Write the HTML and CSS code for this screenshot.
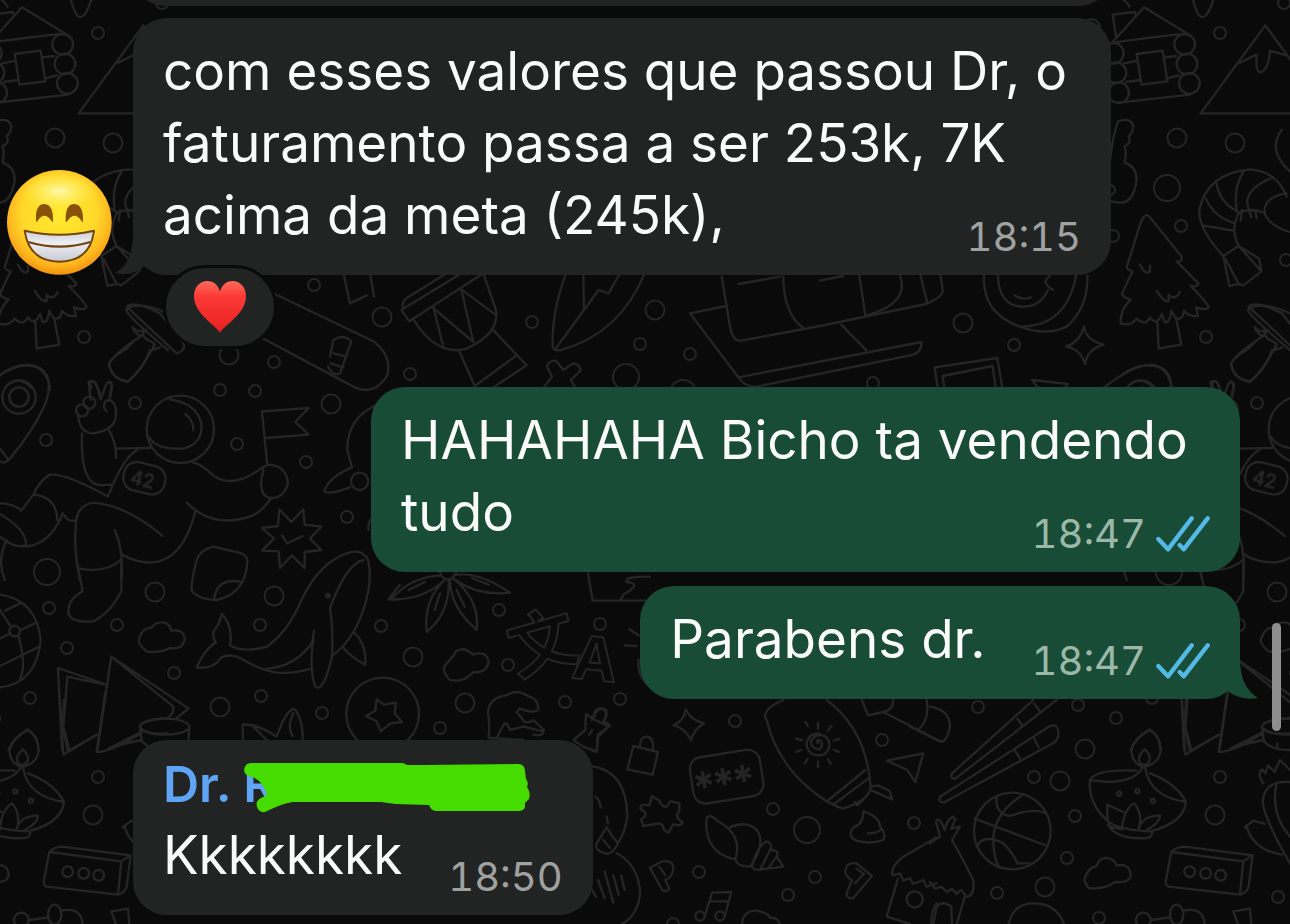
FILE: index.html
```
<!DOCTYPE html>
<html lang="pt-BR">
<head>
  <meta charset="UTF-8" />
  <meta name="viewport" content="width=device-width, initial-scale=1.0"/>
  <title>Chat</title>
  <link rel="stylesheet" href="styles.css">
</head>
<body>

  <!-- Wallpaper: one tile of doodles, repeated every 1122px -->
  <svg class="wallpaper" aria-hidden="true">
    <defs>
      <g id="dot"><circle r="6"/></g>
      <g id="ring"><circle r="9.5"/></g>
      <g id="hoop"><circle r="13"/></g>

      <g id="tile">
        <!-- bubbles between the doodles -->
        <use href="#dot" x="1220" y="33"/><use href="#ring" x="1177" y="138"/><use href="#ring" x="1235" y="143"/>
        <use href="#hoop" x="1167" y="188"/><use href="#dot" x="1181" y="226"/><use href="#dot" x="1113" y="236"/>
        <use href="#dot" x="1286" y="260"/><use href="#dot" x="1284" y="3"/><use href="#dot" x="1206" y="337"/>
        <use href="#dot" x="314" y="285"/><use href="#ring" x="382" y="317"/><use href="#ring" x="229" y="355"/>
        <use href="#dot" x="532" y="322"/><use href="#ring" x="655" y="310"/><use href="#dot" x="640" y="344"/>
        <use href="#dot" x="690" y="354"/><use href="#hoop" x="626" y="377"/><use href="#dot" x="410" y="374"/>
        <use href="#hoop" x="683" y="393"/><use href="#ring" x="963" y="323"/><use href="#dot" x="1014" y="345"/>
        <use href="#dot" x="873" y="383"/><use href="#dot" x="135" y="403"/><use href="#dot" x="274" y="362"/>
        <use href="#dot" x="220" y="390"/><use href="#dot" x="255" y="391"/><use href="#ring" x="331" y="404"/>
        <use href="#dot" x="46" y="440"/><use href="#dot" x="237" y="444"/><use href="#dot" x="306" y="462"/>
        <use href="#dot" x="347" y="517"/><use href="#hoop" x="47" y="572"/><use href="#ring" x="155" y="592"/>
        <use href="#dot" x="49" y="608"/><use href="#dot" x="117" y="625"/><use href="#dot" x="67" y="648"/>
        <use href="#ring" x="274" y="596"/><use href="#dot" x="260" y="625"/><use href="#dot" x="381" y="626"/>
        <use href="#dot" x="174" y="673"/><use href="#dot" x="30" y="698"/><use href="#ring" x="220" y="707"/>
        <use href="#dot" x="261" y="696"/><use href="#dot" x="322" y="713"/><use href="#dot" x="499" y="610"/>
        <use href="#dot" x="600" y="624"/><use href="#ring" x="413" y="657"/><use href="#dot" x="508" y="665"/>
        <use href="#ring" x="465" y="703"/><use href="#dot" x="565" y="702"/><use href="#dot" x="440" y="728"/>
        <use href="#dot" x="620" y="699"/><use href="#dot" x="735" y="721"/><use href="#dot" x="882" y="740"/>
        <use href="#dot" x="773" y="809"/><use href="#hoop" x="807" y="830"/><use href="#dot" x="914" y="823"/>
        <use href="#dot" x="699" y="872"/><use href="#dot" x="815" y="877"/><use href="#dot" x="788" y="895"/>
        <use href="#dot" x="673" y="924"/><use href="#dot" x="978" y="707"/><use href="#dot" x="1078" y="705"/>
        <use href="#dot" x="1116" y="718"/><use href="#ring" x="1085" y="749"/><use href="#dot" x="1034" y="777"/>
        <use href="#ring" x="1060" y="781"/><use href="#dot" x="1220" y="777"/><use href="#dot" x="1075" y="816"/>
        <use href="#ring" x="1215" y="815"/><use href="#dot" x="1067" y="858"/><use href="#ring" x="1045" y="887"/>
        <use href="#dot" x="997" y="893"/><use href="#dot" x="1099" y="918"/><use href="#dot" x="1278" y="897"/>

        <!-- cabin, mountain, guitar, shrimp -->
        <g class="x3" transform="translate(1090 0) scale(.3333)">
          <path d="M66 128L162 22L290 100Q180 112 66 128M78 110L68 44L135 36L138 48"/>
          <circle cx="284" cy="133" r="31"/><circle cx="291" cy="192" r="31"/><circle cx="298" cy="250" r="31"/>
          <circle cx="70" cy="160" r="31"/><circle cx="78" cy="218" r="31"/><circle cx="86" cy="278" r="31"/>
          <path d="M140 162L218 152L232 244L154 254ZM102 190L142 182M226 172L258 168M108 246L150 240M234 234L268 226M86 308L300 284"/>
          <path d="M332 340L526 76L720 340ZM450 188L500 164Q496 214 510 217Q536 212 540 152L590 166"/>
          <path d="M60 480Q70 400 84 364Q124 350 130 380Q128 400 116 408Q126 430 104 438Q110 460 104 488Q140 500 140 540Q130 610 90 608Q50 606 40 590"/>
          <circle cx="60" cy="570" r="15"/>
          <path d="M400 768Q326 690 328 630Q350 520 480 508Q560 514 590 590M400 768L446 738Q420 690 446 640Q480 620 524 640M338 676L430 692M348 596Q370 650 434 670M380 552Q390 610 446 636M460 516Q430 560 440 630M550 532Q480 560 472 600Q470 620 480 634M524 640Q520 590 590 580M524 640Q540 680 600 696M456 630L452 662M476 626L484 652M496 630L500 654M400 768L418 858L446 852L406 776M446 852L460 856L514 814L508 776L446 738L514 814"/>
          <path d="M575 390Q530 450 600 515M300 -40Q330 120 370 0M70 -20Q110 0 118 20M-8 60Q20 50 30 80"/>
        </g>

        <!-- pine tree, mushroom, coin, sled -->
        <g class="x3" transform="translate(820 230) scale(.3333)">
          <path d="M958 -10Q975 -60 990 -38L1085 80Q1088 96 1070 94L1135 160Q1134 172 1112 168Q1150 205 1166 230Q1160 244 1128 232L1134 258Q1110 262 1092 242Q1090 272 1066 264L1054 242Q1050 280 1034 276L1026 252Q1010 290 990 262Q976 290 950 266Q930 290 902 280Q900 240 932 208Q912 204 906 192Q920 160 938 124Q916 118 922 106Z"/>
          <path d="M1012 276L1016 356L1084 344L1068 262M960 104Q976 136 990 124L990 108M1010 182Q1030 216 1046 214L1046 194Q1064 214 1080 186"/>
          <path d="M1284 240Q1320 210 1410 250M1284 240Q1290 260 1410 360M1304 292Q1320 310 1336 300Q1330 320 1350 330L1368 340L1366 360L1386 352M1330 318Q1250 370 1234 400Q1240 446 1290 456Q1330 420 1370 344"/>
          <path d="M492 137Q486 250 600 290Q680 320 740 290Q806 230 802 137M600 290Q740 290 768 137M534 137Q536 230 612 230Q660 230 684 180M584 196Q608 212 632 202M690 137Q660 160 700 180"/>
          <path d="M792 290Q798 330 850 344Q800 360 796 402Q780 356 738 350Q780 336 792 290Z"/>
          <path d="M344 412L532 384L548 480M344 412L354 480M368 438L518 408L528 480M368 438L374 480M636 450L744 462L730 480M636 450L660 480M850 474Q960 390 1010 408Q1054 430 1056 480M920 474Q960 430 1000 474"/>
          <path d="M1180 474Q1170 450 1190 456L1206 490M1230 456Q1250 450 1236 500"/>
          <path d="M-282 228L-390 250L-245 442L305 336Q306 370 270 376L-190 470Q-225 472 -245 442M-295 140L-270 290Q-262 336 -236 332L0 288L318 222Q370 200 368 180L362 137"/>
          <path d="M-245 162L-120 140M-110 140Q-110 250 -50 294M64 284L140 362M302 137L322 220M118 137L136 256M240 137Q270 220 140 256M0 152L70 138"/>
        </g>

        <!-- drum, leaf, skateboard -->
        <g class="x3" transform="translate(370 260) scale(.3333)">
          <path d="M94 150L118 184L340 40M94 150L330 6M98 140Q96 120 120 108L230 40M130 178Q200 290 290 266Q390 220 378 150L340 40M188 142L310 246L274 88L376 164M190 142L220 260M366 206L470 316L376 378M268 274L314 378L440 286"/>
          <path d="M588 40Q544 160 548 262Q556 274 574 270Q750 220 824 40M554 270L686 90L716 100L750 40M640 40L642 150"/>
          <path d="M524 378L546 350L530 318Q540 300 558 302L580 330L610 310Q630 314 632 332L602 360L614 378"/>
          <path d="M0 40L12 110M-60 130L-10 106M-60 130L-80 40"/>
        </g>
        <g class="x3" transform="translate(0 0) scale(.3333)">
          <path d="M820 880L1120 1024Q1180 1070 1160 1130Q1120 1190 1060 1160L760 1000"/>
          <path d="M990 1070L1000 1020Q1030 1000 1054 1024L1020 1120Q1000 1130 984 1100M1000 1060L1040 1070M992 1090L1030 1102"/>
        </g>

        <!-- pin, astronaut, flag, rocket -->
        <g class="x3" transform="translate(0 350) scale(.3333)">
          <path d="M0 75Q60 30 120 54Q160 80 140 150Q110 230 26 330Q10 344 0 334M0 296L26 330"/>
          <circle cx="57" cy="141" r="50"/><circle cx="57" cy="141" r="29"/>
          <circle cx="541" cy="238" r="101"/>
          <path d="M448 262Q470 300 550 296Q610 280 604 220Q590 160 510 148M556 192Q580 210 580 240"/>
          <path d="M234 190Q236 250 280 250Q350 240 348 190Q350 160 330 150Q310 150 312 174L320 184M272 150L266 96Q280 86 290 104L302 148L320 100Q334 90 334 110L328 150"/>
          <circle cx="246" cy="181" r="18"/><circle cx="268" cy="158" r="18"/>
          <path d="M246 250Q240 400 300 406L334 404M326 240Q350 280 348 324M348 296L450 294M412 300Q370 320 324 440Q200 370 150 374Q120 390 100 434L64 482Q40 460 0 460M100 434Q170 440 172 510M64 590Q150 590 188 490L200 506Q210 514 226 512M0 492Q80 540 78 584Q50 600 0 560"/>
          <path d="M580 338Q600 340 640 376Q700 420 790 350M560 458Q640 540 760 496Q790 480 812 446M586 486Q540 660 420 634Q380 626 364 610M488 558Q380 466 280 458Q230 466 228 520Q220 600 240 690M344 540Q372 600 364 690M240 656Q320 670 362 630"/>
          <path d="M786 184L926 174L886 216L926 254L798 264M786 184L802 346M790 360Q780 350 810 344Q860 350 864 400Q850 446 812 444Q780 440 784 390Z"/>
          <rect x="370" y="342" width="126" height="86" rx="38" transform="rotate(14 433 385)"/>
          <path d="M838 478L874 516L910 478L914 524L964 530L930 566L964 600L914 606L914 654L876 616L840 654L836 604L786 602L822 566L786 534L834 528ZM846 556L862 580L908 558"/>
          <path d="M1140 160Q1040 200 1042 300L1056 352Q990 380 974 420Q970 440 1050 412M1140 500Q1100 500 1106 540"/>
          <circle cx="1079" cy="394" r="26"/>
          <path d="M328 50Q340 90 384 94Q430 60 450 0M328 50Q320 30 380 -4L400 -26M380 -130Q400 -150 480 -110L550 -20Q560 0 530 10L380 -130M400 -60L420 -40L440 -60"/>
        </g>
        <text class="ink badge-no" x="131" y="486" transform="rotate(14 142 478)">42</text>

        <!-- ball, stocking, whale, map, cup, star -->
        <g class="x3" transform="translate(0 560) scale(.3333)">
          <path d="M0 104Q110 120 122 240Q110 370 0 382M0 150L30 196M62 210L104 190M0 236L28 222M16 152L60 130M0 318L118 260M56 230Q80 320 60 356"/>
          <circle cx="44" cy="213" r="16"/>
          <path d="M230 0L248 94Q200 120 206 164Q220 190 280 184Q330 160 364 94L364 0M20 -60Q-10 0 14 60"/>
          <path d="M590 0Q570 80 576 94Q600 120 650 120Q740 100 742 0Q740 -20 700 -26L640 -40Q600 -30 590 0M642 120Q650 50 724 66"/>
          <path d="M440 274Q410 250 418 234Q430 200 454 204Q470 180 500 190Q512 200 514 212Q550 206 554 236Q550 270 510 264Q480 280 440 274Z"/>
          <path d="M666 162Q660 190 640 216Q640 240 648 248Q620 260 590 322Q640 330 664 292Q690 280 720 294Q780 330 830 338Q880 342 934 326M666 162Q700 200 690 256Q730 280 800 260Q860 220 900 130Q940 40 1000 0Q1080 -50 1104 0Q1120 60 1090 150Q1060 240 998 286M1090 0Q1040 10 990 144Q1000 200 996 290Q970 400 946 380Q926 330 942 212M942 240Q890 320 800 326M1060 216Q1100 250 1096 314Q1050 290 1030 262"/>
          <path d="M186 570L174 324L314 372M208 570L190 500L202 350L314 374M292 570L334 290L566 446L530 474M334 290L520 440Q524 460 500 476M216 566L290 524M326 566L416 520"/>
          <ellipse cx="494" cy="500" rx="74" ry="24"/><path d="M420 500L426 546M568 500L566 540"/>
          <circle cx="1148" cy="462" r="109"/>
          <path d="M1130 418L1152 434L1188 428L1184 460L1206 486L1172 490L1142 514L1130 484L1098 468L1126 452Z"/>
          <path d="M730 570L728 494Q770 490 830 530L850 480Q880 430 890 456Q910 490 908 540M760 500L800 540M878 528Q860 500 880 460"/>
          <path d="M1200 74L1166 118L1200 118"/><circle cx="984" cy="107" r="5"/>
          <path d="M26 570Q40 530 84 510Q116 530 116 570"/>
        </g>

        <!-- leaves, cloud, poodle, ornament -->
        <g class="x3" transform="translate(390 560) scale(.3333)">
          <circle cx="174" cy="34" r="24"/>
          <path d="M154 46Q60 50 4 118Q100 120 164 60M164 60Q100 120 110 216Q180 160 176 60M180 60Q180 140 260 210Q270 120 190 56M190 46Q260 30 360 98Q270 110 196 60M56 90L104 66M134 150L150 100M200 90L224 140M246 54L296 74"/>
          <path d="M180 360Q150 330 170 310Q190 290 196 276Q220 256 248 284Q290 270 296 306Q290 340 250 336Q220 370 180 360Z"/>
          <path d="M296 534Q300 500 294 456Q300 410 350 406Q380 386 410 406Q450 420 444 450Q430 462 390 446L380 456L404 486Q420 490 430 480M320 534L340 496Q350 480 360 510L400 500L460 514Q460 530 430 524M300 534L400 540M430 480L462 510"/>
          <path d="M550 540L586 510L588 462L616 480L656 500L624 530L620 576L580 560ZM612 470Q614 440 640 446Q656 460 640 486M598 524L606 510"/>
          <path d="M594 40L608 122L770 122M780 50Q700 50 710 66Q760 70 700 104L690 122M718 208L746 226M704 256L740 258M746 300Q740 350 780 380"/>
        </g>
        <text class="ink glyph-zh" x="508" y="668" transform="rotate(-16 540 642)">文</text>
        <text class="ink glyph-a" x="573" y="680" transform="rotate(6 594 658)">A</text>

        <!-- lock, surfboard, password, shell -->
        <g class="x3" transform="translate(590 690) scale(.3333)">
          <path d="M288 58Q300 90 342 100Q310 120 304 150Q280 110 250 106Q280 96 288 58Z"/>
          <path d="M130 168L204 186L188 254L112 238ZM150 172Q150 138 172 140Q194 146 188 180"/>
          <rect x="304" y="190" width="212" height="140" rx="36" transform="rotate(-9 410 260)"/>
          <path d="M186 318L208 332Q214 352 230 350L242 334L268 340L268 364Q250 380 278 396Q272 412 250 402L236 428L222 420Q220 396 196 402L160 408L154 388Q180 370 152 358Q150 338 178 346Z"/>
          <path d="M580 30Q510 60 530 90Q550 180 620 260Q700 340 760 356Q840 330 842 290Q830 120 710 30M716 330L826 240M730 344L840 262M846 290L864 286L900 304L906 328L846 302M794 336L802 346L820 330"/>
          <path d="M684 160Q676 150 690 150Q704 164 688 178Q660 176 664 152Q680 126 708 140Q732 170 702 194Q660 204 650 168Q650 130 690 130M684 98V116M684 214V232M724 108L714 122M654 108L646 96M748 146L732 152M748 186L732 180M618 146L636 150M618 186L634 180M644 220L652 208M722 220L714 208"/>
          <path d="M890 212L1000 190L976 276L952 240ZM816 30L834 76L880 66Q910 60 910 30M880 66L1050 154M984 120Q1020 90 1010 30"/>
          <path d="M424 506Q340 480 350 384Q360 370 384 394Q450 430 440 490Q440 510 424 506M420 412Q470 390 500 420Q530 460 480 530Q440 530 436 506M486 530Q500 470 530 454Q550 460 540 480L510 540Q490 540 486 530M540 480Q570 480 560 500L534 536L512 538M560 500L580 530L534 536"/>
          <path d="M820 364Q870 380 870 410Q890 430 880 450Q840 464 800 452Q770 440 790 412Q820 404 820 364ZM834 430Q860 430 874 418"/>
          <path d="M180 534L216 514Q250 510 250 534Q250 560 226 570L238 596Q230 606 218 602ZM208 530L226 556"/>
          <path d="M846 558L800 520Q770 516 766 540Q764 560 786 570L770 610Q772 630 790 624ZM800 536L822 552L794 580"/>
          <path d="M344 680L366 608L424 606L404 680M358 634L416 634"/><circle cx="330" cy="678" r="14"/><circle cx="390" cy="678" r="14"/>
          <path d="M456 702Q460 660 500 662Q540 670 540 684Q560 680 570 702M0 228Q110 240 112 380Q104 430 84 460Q70 490 50 492Q10 480 20 460L50 412Q66 440 84 460M40 450L60 474M80 490Q140 520 150 600Q150 670 96 702M16 320Q30 330 32 352M50 380L54 400M24 570L44 624M44 544L70 638M70 556L86 614M94 558L104 600M0 590L18 620"/>
          <path d="M1040 442L940 500Q900 530 908 556L930 550L940 572L960 564L970 582L1000 570L1010 590L1040 580M924 566L890 680L960 702M1040 640Q1024 660 1024 702"/><circle cx="974" cy="628" r="24"/>
          <path d="M5 90L20 64Q30 50 48 60Q54 80 40 92L60 106L24 134L20 186L0 176"/>
        </g>
        <text class="ink pin-code" x="697" y="802" transform="rotate(-9 697 802)">***</text>

        <!-- chopsticks, basketball, lamp, box, hut -->
        <g class="x3" transform="translate(930 690) scale(.3333)">
          <path d="M310 30L66 250Q60 270 76 266L380 30M262 86L278 108M312 40L330 64M30 320Q24 340 44 336L376 156Q396 130 376 106L360 108ZM254 180L270 206M310 140L326 172"/>
          <circle cx="247" cy="423" r="115"/>
          <path d="M134 386L352 468M282 312Q190 370 190 450Q190 500 206 530M200 322Q194 370 240 378Q320 350 352 374M140 470Q160 430 220 460Q250 490 262 520L300 520"/>
          <path d="M18 396Q24 380 36 400L44 420Q50 390 68 380L76 388L64 416L90 410L66 450Q100 510 130 570Q134 620 110 620L94 600L80 612L66 596L50 606L34 590L16 596L0 576M0 460L30 440M18 396L30 440M104 622L80 702M10 702L20 650Q40 630 64 650L66 702"/>
          <path d="M236 702Q250 640 310 640Q380 640 402 702"/>
          <path d="M660 118Q610 150 604 180Q606 220 640 232Q690 220 692 180Q690 140 660 118ZM644 178Q620 200 630 220Q650 232 660 210Q660 190 644 178Z"/>
          <path d="M480 270Q500 236 620 242M480 270Q474 340 530 390Q560 420 660 424Q760 400 768 336Q740 280 660 250M480 270Q600 290 636 236M646 236Q660 320 768 336M532 344Q530 390 540 410L576 418Q580 360 612 340Q640 370 626 420Q630 380 690 376Q690 400 650 420M532 344L580 366M534 404Q560 450 650 444Q670 440 666 424"/>
          <circle cx="568" cy="311" r="6"/><circle cx="622" cy="304" r="6"/><circle cx="669" cy="332" r="6"/>
          <path d="M476 594Q456 570 468 556Q480 530 500 528Q510 500 530 504Q556 510 560 526Q600 520 602 554Q600 580 556 576Q520 600 476 594Z"/>
          <path d="M724 486L940 514L930 614L716 590Q704 584 708 570ZM724 486Q740 470 764 470L968 496L956 590Q950 610 930 614M940 514L968 496"/>
          <circle cx="779" cy="545" r="16"/><circle cx="827" cy="550" r="16"/><circle cx="872" cy="556" r="16"/>
          <path d="M756 30L766 194L866 134M768 30L764 110L780 186M892 6L866 186Q880 190 940 164L1000 130M940 164L1000 150M996 110L1000 150Q1020 180 1080 180M996 110Q1000 90 1080 84M998 114Q1020 136 1080 130M1042 160V172"/>
          <path d="M1080 276Q1000 270 998 340Q1010 400 1080 520M1040 280Q1020 370 1080 440M1000 280Q980 250 996 238L1006 250L1014 226L1034 246L1050 210L1080 240M944 412L970 392L1004 402M950 410Q970 480 1056 494"/>
          <path d="M664 690L720 682M760 662Q820 650 824 702M910 664L960 656L964 702M910 664L924 702"/>
          <ellipse cx="740" cy="674" rx="20" ry="30"/><circle cx="640" cy="690" r="22"/>
          <path d="M0 50Q60 60 60 110Q50 160 30 154L-60 110"/>
        </g>
      </g>
    </defs>
    <use href="#tile" x="-1122"/>
    <use href="#tile"/>
    <use href="#tile" x="1122"/>
  </svg>

  <main class="chat">

    <div class="row in">
      <div class="bubble previous"></div>
    </div>

    <div class="row in">
      <svg class="avatar" viewBox="0 0 315 315" role="img" aria-label="Emoji sorrindo">
        <defs>
          <radialGradient id="face" cx=".5" cy=".42" r=".6">
            <stop offset="0" stop-color="#ffe92e"/>
            <stop offset=".6" stop-color="#ffd829"/>
            <stop offset=".82" stop-color="#fdb61e"/>
            <stop offset="1" stop-color="#f08a0c"/>
          </radialGradient>
          <radialGradient id="shine">
            <stop offset="0" stop-color="#fff9b0"/>
            <stop offset="1" stop-color="#fff04a" stop-opacity="0"/>
          </radialGradient>
          <linearGradient id="teeth" x1="0" y1="0" x2="0" y2="1">
            <stop offset="0" stop-color="#c9ccd4"/>
            <stop offset=".4" stop-color="#eeeff3"/>
            <stop offset="1" stop-color="#c6c9d1"/>
          </linearGradient>
        </defs>
        <circle cx="157" cy="157" r="157" fill="url(#face)"/>
        <ellipse cx="157" cy="64" rx="116" ry="58" fill="url(#shine)"/>
        <path d="M87 154Q84 102 112 102Q140 104 138 154Q136 158 133 152Q112 122 92 152Q88 158 87 154Z" fill="#8a5208"/>
        <path d="M176 154Q174 102 202 102Q230 104 228 154Q226 158 223 152Q202 122 182 152Q177 158 176 154Z" fill="#8a5208"/>
        <path d="M53 182Q157 206 261 182Q250 274 157 275Q66 274 53 182Z" fill="url(#teeth)" stroke="#74420a" stroke-width="6" stroke-linejoin="round"/>
        <path d="M64 216Q157 244 250 216" fill="none" stroke="#74420a" stroke-width="7"/>
        <path d="M212 304A157 157 0 0 0 291 238Q262 284 212 304Z" fill="#f3dfc4"/>
      </svg>
      <div class="bubble wide">
        <svg class="tail tail-in" viewBox="0 0 32 40" aria-hidden="true">
          <path d="M18 0Q18 28 0 38Q18 42 31 30L31 0Z"/>
        </svg>
        com esses valores que passou Dr, o faturamento passa a ser 253k, 7K acima da meta (245k),
        <span class="meta"><time>18:15</time></span>
        <button class="reaction" type="button" aria-label="Reação: coração">
          <svg viewBox="0 0 156 156" aria-hidden="true">
            <defs>
              <linearGradient id="heart" x1="0" y1="0" x2="0" y2="1">
                <stop offset="0" stop-color="#ff6a5c"/>
                <stop offset=".3" stop-color="#fb3a36"/>
                <stop offset="1" stop-color="#e8201f"/>
              </linearGradient>
            </defs>
            <path d="M78 156C70 136 0 100 0 46C0 16 20 0 40 0C60 0 74 14 78 32C82 14 96 0 116 0C136 0 156 16 156 46C156 100 86 136 78 156Z" fill="url(#heart)"/>
          </svg>
        </button>
      </div>
    </div>

    <div class="row out after-reaction">
      <div class="bubble medium">
        HAHAHAHA Bicho ta vendendo tudo
        <span class="meta"><time>18:47</time>
          <svg class="ticks" viewBox="0 0 162 108" role="img" aria-label="Lida"><path d="M7 69L36 100L107 7M71 87L83 100L155 7"/></svg>
        </span>
      </div>
    </div>

    <div class="row out grouped">
      <div class="bubble">
        <svg class="tail tail-out" viewBox="0 0 32 40" aria-hidden="true">
          <path d="M14 0Q14 28 32 39Q12 42 1 31L1 0Z"/>
        </svg>
        Parabens dr.
        <span class="meta"><time>18:47</time>
          <svg class="ticks" viewBox="0 0 162 108" role="img" aria-label="Lida"><path d="M7 69L36 100L107 7M71 87L83 100L155 7"/></svg>
        </span>
      </div>
    </div>

    <div class="row in new-sender">
      <div class="bubble">
        <div class="sender">Dr. R
          <svg class="marker" viewBox="0 0 370 60" aria-hidden="true">
            <path d="M88 6L238 6Q242 6 244 8L260 8L356 7Q362 8 362 14L363 22Q366 26 364 30Q368 36 366 42L362 46Q363 54 356 54L274 54Q268 54 266 48L232 47L218 45L130 45Q120 46 102 55Q96 56 94 50Q92 44 98 41L104 38Q102 30 96 24L90 20Q82 20 81 13Q82 6 88 6Z"/>
          </svg>
        </div>
        Kkkkkkkk
        <span class="meta"><time>18:50</time></span>
      </div>
    </div>

  </main>

  <div class="scroll-thumb"></div>

</body>
</html>
```
FILE: styles.css
```
/* ---------------- GENERAL ---------------- */
* {
  box-sizing: border-box;
}

body {
  margin: 0;
  min-height: 100vh;
  background: #0a0a0a;
  color: #fafafa;
  font-family: Inter, "Liberation Sans", sans-serif;
  font-size: 53px;
  line-height: 72px;
  overflow: hidden;
}

/* ---------------- WALLPAPER ---------------- */
.wallpaper {
  position: fixed;
  top: 0;
  left: 0;
  width: 100%;
  height: 100%;
  z-index: -1;
  fill: none;
  stroke: #252525;
  stroke-width: 2px;
  stroke-linejoin: round;
  stroke-linecap: round;
}

.x3 {
  stroke-width: 7px;
}

.ink {
  font-weight: 400;
  stroke-width: 1px;
}

.badge-no {
  font-size: 19px;
  fill: #252525;
}

.pin-code {
  font-size: 40px;
  fill: #252525;
}

.glyph-zh {
  font-family: "Noto Sans CJK SC", sans-serif;
  font-size: 68px;
  font-weight: 700;
  stroke-width: 2px;
}

.glyph-a {
  font-size: 60px;
  font-weight: 700;
  stroke-width: 2px;
}

/* ---------------- ROWS ---------------- */
.chat {
  display: flex;
  flex-direction: column;
}

.row {
  display: flex;
  align-items: flex-end;
}

.in {
  padding-left: 133px;
  padding-right: 50px;
  margin-top: 12px;
}

.in:first-child {
  margin-top: -58px;
}

.out {
  justify-content: flex-end;
  padding-left: 133px;
  padding-right: 50px;
}

.after-reaction {
  margin-top: 112px;
}

.grouped {
  margin-top: 14px;
}

.new-sender {
  margin-top: 41px;
}

.avatar {
  flex: none;
  width: 105px;
  height: 105px;
  margin-left: -126px;
  margin-right: 21px;
}

/* ---------------- BUBBLES ---------------- */
.bubble {
  position: relative;
  display: flow-root;
  padding: 17px 30px 16px;
  border-radius: 34px;
  background: #222424;
}

.out .bubble {
  background: #184c36;
}

.wide {
  max-width: 978px;
}

.medium {
  max-width: 869px;
}

.previous {
  width: 978px;
  height: 64px;
}

.tail {
  position: absolute;
  bottom: 0;
  width: 32px;
  height: 40px;
}

.tail-in {
  left: -18px;
  fill: #222424;
}

.tail-out {
  right: -18px;
  fill: #184c36;
}

.sender {
  position: relative;
  margin-bottom: 8px;
  font-size: 50px;
  font-weight: 600;
  line-height: 54px;
  color: #5fa4f5;
}

.marker {
  position: absolute;
  top: 0;
  left: 0;
  width: 370px;
  height: 60px;
  fill: #46dc00;
}

/* ---------------- TIME + TICKS ---------------- */
.meta {
  float: right;
  display: flex;
  align-items: center;
  gap: 10px;
  margin-top: 36px;
  margin-left: 46px;
  font-size: 40px;
  font-variant-numeric: tabular-nums;
  line-height: 44px;
  color: #a0a1a1;
}

.out .meta {
  color: #9cb8a8;
}

.ticks {
  width: 54px;
  height: 36px;
  fill: none;
  stroke: #55b9e6;
  stroke-width: 13px;
  stroke-linecap: round;
  stroke-linejoin: round;
}

/* ---------------- REACTION ---------------- */
.reaction {
  position: absolute;
  left: 30px;
  bottom: -74px;
  display: flex;
  align-items: center;
  justify-content: center;
  width: 114px;
  height: 84px;
  padding: 0;
  border: 3px solid #0a0a0a;
  border-radius: 42px;
  background: #222424;
}

.reaction svg {
  width: 52px;
  height: 52px;
}

/* ---------------- SCROLLBAR ---------------- */
.scroll-thumb {
  position: fixed;
  top: 623px;
  right: 9px;
  width: 9px;
  height: 108px;
  border-radius: 5px;
  background: #8e8e8e;
}
```
